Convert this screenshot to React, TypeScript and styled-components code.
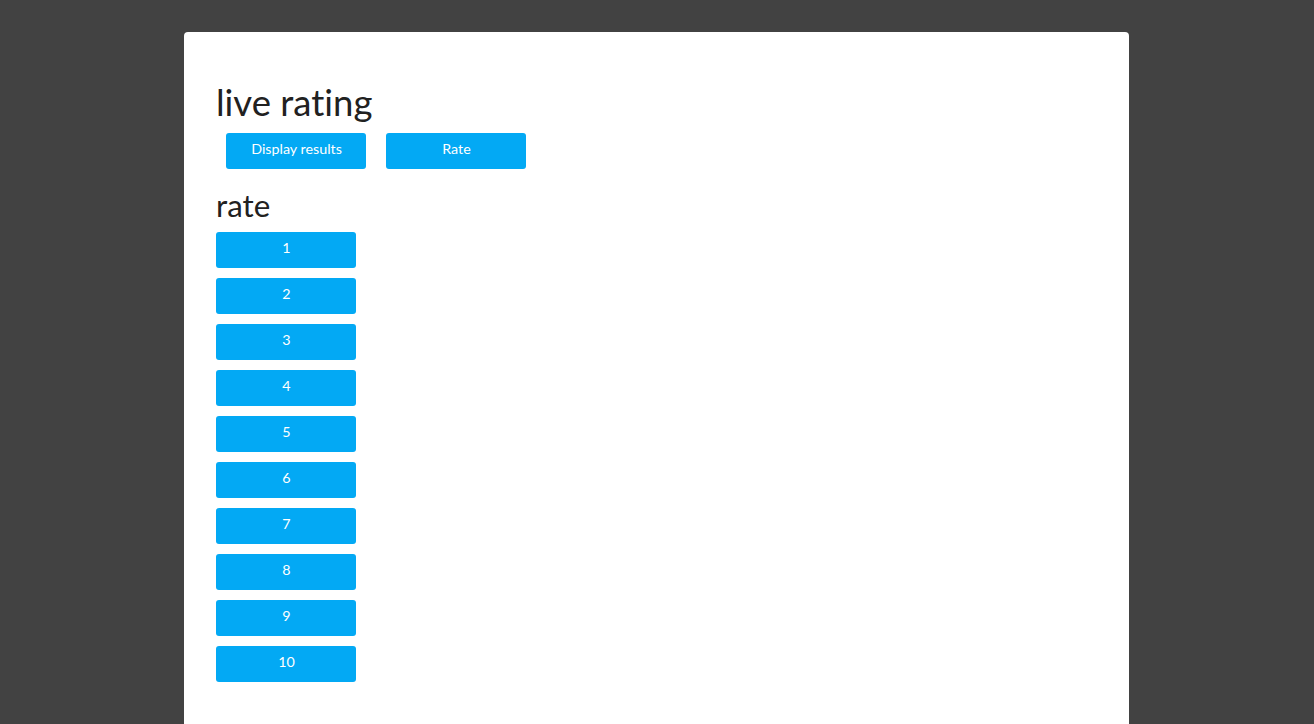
import styled, { createGlobalStyle } from "styled-components";

const GlobalStyle = createGlobalStyle`
  html, body {
    margin: 0;
    padding: 0;
    background: #424242;
    font-family: Lato, "Open Sans", sans-serif;
    font-variant-ligatures: none;
  }
`;

const Page = styled.div`
  padding-top: 32px;
  min-height: 724px;
  box-sizing: border-box;
`;

const Card = styled.main`
  width: 945px;
  margin: 0 185px 0 184px;
  background: #fff;
  border-radius: 4px 4px 0 0;
  padding: 48px 32px 40px;
  box-sizing: border-box;
  min-height: 692px;
`;

const Title = styled.h1`
  margin: 0;
  font-size: 36.5px;
  font-weight: 400;
  line-height: 44px;
  color: #212121;
`;

const SubTitle = styled.h2`
  margin: 19px 0 10px;
  font-size: 31.3px;
  font-weight: 400;
  line-height: 34px;
  color: #212121;
`;

const Toolbar = styled.div`
  display: flex;
  gap: 20px;
  padding-left: 10px;
  margin-top: 9px;
`;

const Button = styled.button`
  display: block;
  width: 140px;
  height: 36px;
  border: none;
  border-radius: 3px;
  background: #03a9f4;
  color: #fff;
  font-family: Lato, sans-serif;
  font-size: 14.3px;
  cursor: pointer;
  padding: 0 0 5px 1px;
`;

const RateList = styled.div`
  display: flex;
  flex-direction: column;
  gap: 10px;
`;

export default function App() {
  return (
    <>
      <GlobalStyle />
      <Page>
        <Card>
          <Title>live rating</Title>
          <Toolbar>
            <Button>Display results</Button>
            <Button>Rate</Button>
          </Toolbar>
          <SubTitle>rate</SubTitle>
          <RateList>
            {[1, 2, 3, 4, 5, 6, 7, 8, 9, 10].map((n) => (
              <Button key={n}>{n}</Button>
            ))}
          </RateList>
        </Card>
      </Page>
    </>
  );
}
